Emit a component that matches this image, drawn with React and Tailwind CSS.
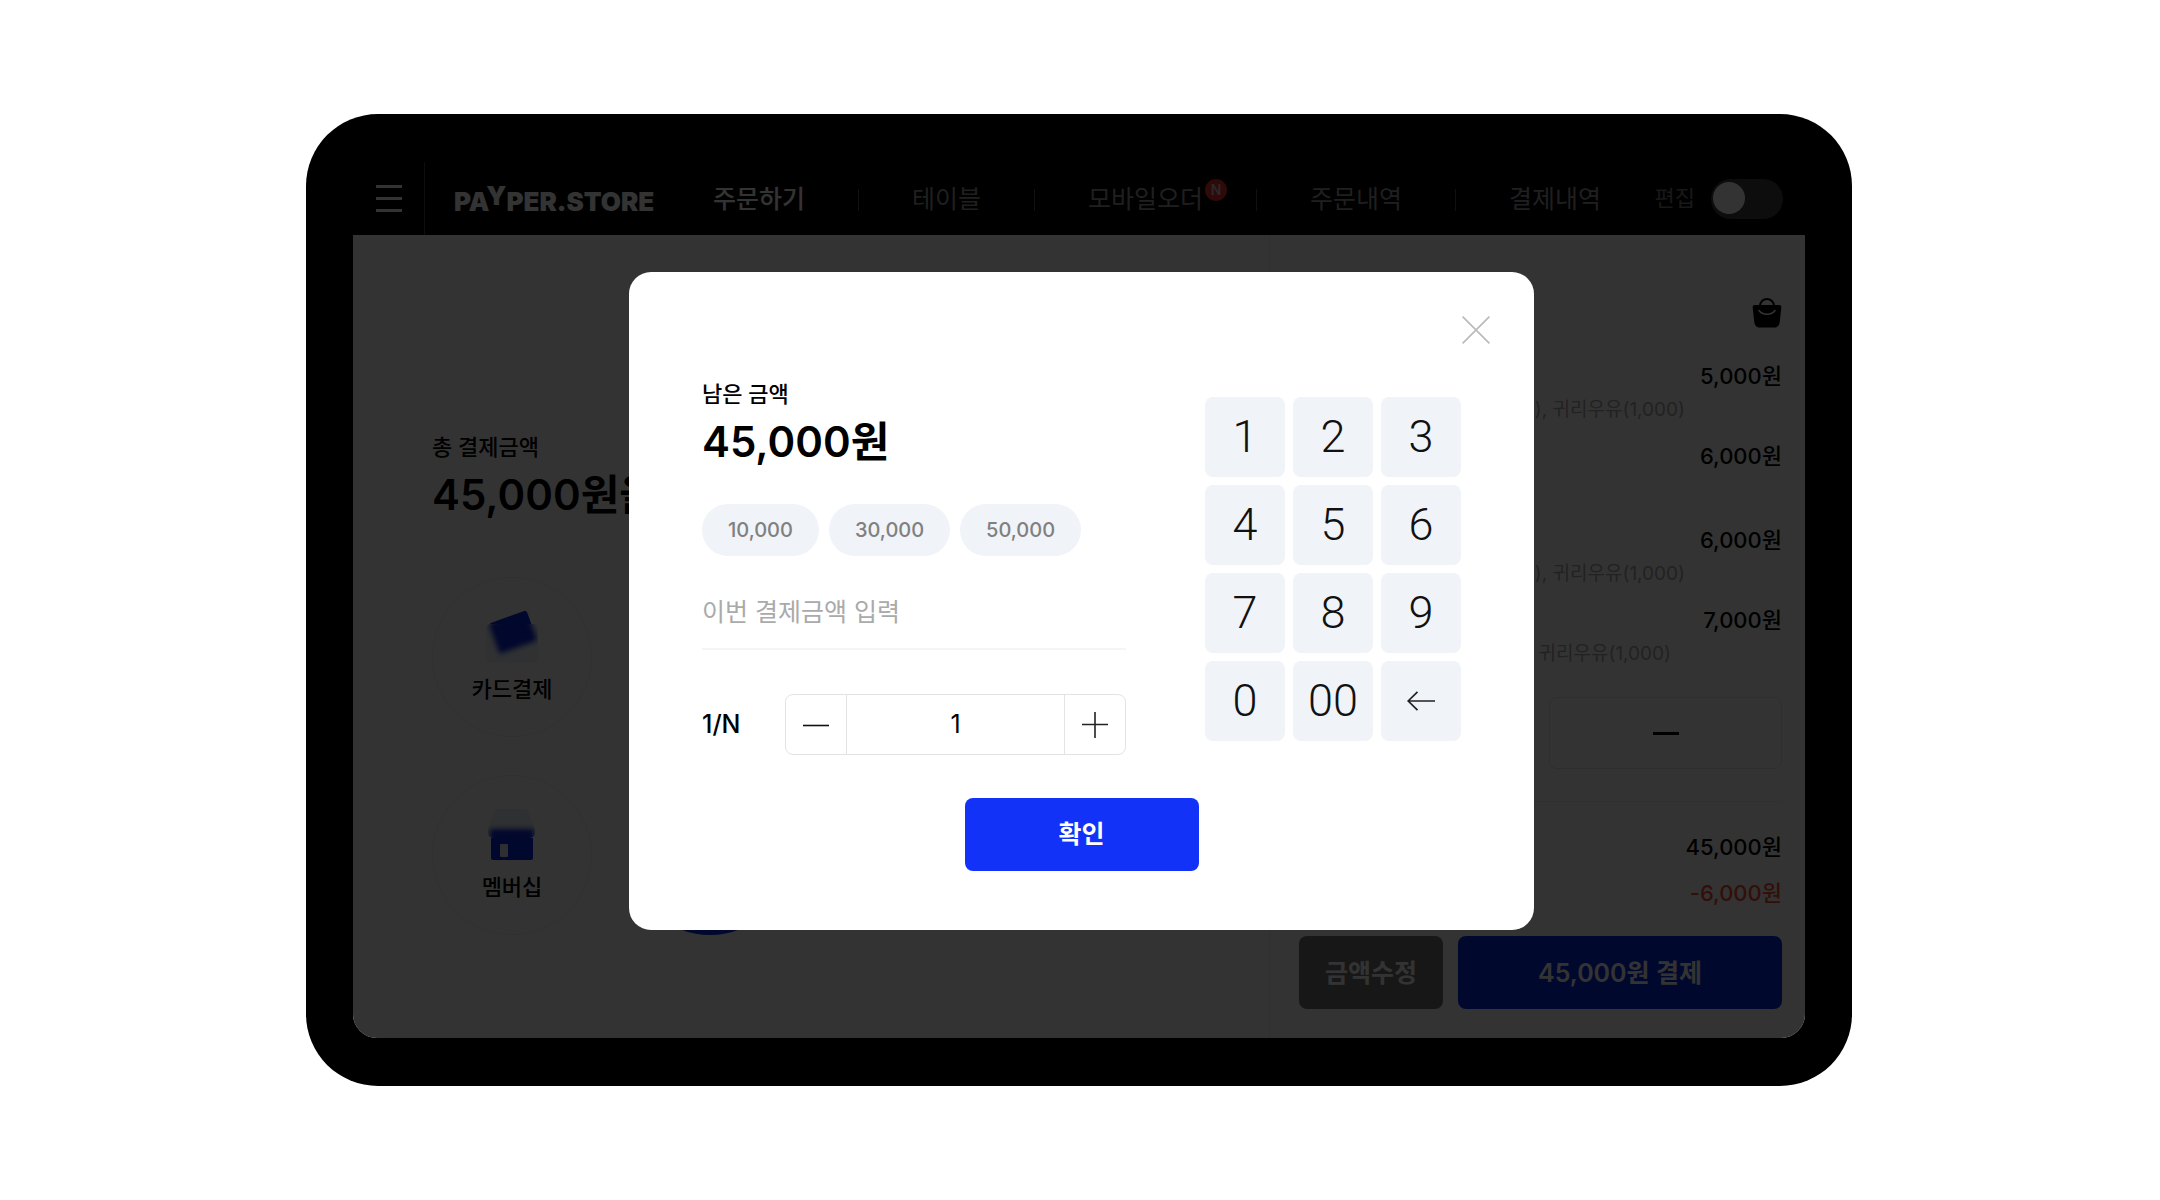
import React, { useState } from 'react';

const tabs = [
  { name: '주문하기', active: true },
  { name: '테이블' },
  { name: '모바일오더', isNew: true },
  { name: '주문내역' },
  { name: '결제내역' }
];

const orderItems = [
  { id: 1, price: '5,000원', option: '), 귀리우유(1,000)', optionClass: 'pr-[97px]' },
  { id: 2, price: '6,000원' },
  { id: 3, price: '6,000원', option: '), 귀리우유(1,000)', optionClass: 'pr-[97px]' },
  { id: 4, price: '7,000원', option: '귀리우유(1,000)', optionClass: 'pr-[111px]' }
];

const quickAmounts = ['10,000', '30,000', '50,000'];
const keys = ['1', '2', '3', '4', '5', '6', '7', '8', '9', '0', '00'];

const Logo = () => (
  <svg width="204" height="48" viewBox="0 0 204 48" className="overflow-visible" role="img" aria-label="PAYPER.STORE">
    <text x="0" y="36" fill="#fff" fontSize="26" fontWeight="900" fontFamily="Inter, sans-serif">
      PA<tspan dx="-1" dy="-6">Y</tspan><tspan dy="6">PER.STORE</tspan>
    </text>
  </svg>
);

const CardIcon = () => (
  <svg width="52" height="52" viewBox="0 0 52 52" aria-hidden="true">
    <defs>
      <filter id="cardBlur" x="-20%" y="-20%" width="140%" height="140%">
        <feGaussianBlur stdDeviation="2.5" />
      </filter>
      <clipPath id="cardTop"><rect x="0" y="0" width="52" height="13" /></clipPath>
      <clipPath id="cardFront"><rect x="0" y="13" width="52" height="39" rx="4" /></clipPath>
    </defs>
    <rect x="0" y="13" width="52" height="39" rx="4" fill="#eaf2f8" />
    <g clipPath="url(#cardTop)">
      <rect x="7" y="5" width="40" height="32" rx="3" fill="#0828e0" transform="rotate(-20 27 21)" />
    </g>
    <g clipPath="url(#cardFront)">
      <rect x="7" y="5" width="40" height="32" rx="3" fill="#0828e0" transform="rotate(-20 27 21)" filter="url(#cardBlur)" />
    </g>
  </svg>
);

const StoreIcon = () => (
  <svg width="52" height="52" viewBox="0 0 52 52" aria-hidden="true">
    <defs>
      <filter id="storeBlur" x="-20%" y="-40%" width="140%" height="180%">
        <feGaussianBlur stdDeviation="2.5" />
      </filter>
      <clipPath id="storeRoof"><path d="M9 0h32l8 20v4a5 5 0 0 1-5 5H7a5 5 0 0 1-5-5v-4z" /></clipPath>
    </defs>
    <path d="M9 0h32l8 20v4a5 5 0 0 1-5 5H7a5 5 0 0 1-5-5v-4z" fill="#eaf0f8" />
    <path d="M5 29h42v20a2 2 0 0 1-2 2H7a2 2 0 0 1-2-2z" fill="#0828e0" />
    <g clipPath="url(#storeRoof)">
      <rect x="4" y="20" width="44" height="20" fill="#0828e0" filter="url(#storeBlur)" />
    </g>
    <rect x="14" y="35" width="8" height="13" rx="1" fill="#e6ebf2" />
  </svg>
);

const BagIcon = () => (
  <svg width="30" height="30" viewBox="0 0 30 30" aria-hidden="true">
    <path d="M8 9V8a7 7 0 0 1 14 0v1" fill="none" stroke="#000" strokeWidth="2" />
    <path d="M3 7h24c1.800 0 2.500 1 2.300 2.500l-1.500 14c-.5 4-2.300 6-5.800 6H8c-3.500 0-5.300-2-5.800-6L.7 9.500C.5 8 1.200 7 3 7z" fill="#000" />
    <path d="M7 12.500c3.500 5 12.500 5 16 0" fill="none" stroke="#fff" strokeWidth="1.500" strokeLinecap="round" />
  </svg>
);

const Header = () => (
  <header className="flex h-[73px] items-stretch bg-black text-white">
    <button
      type="button"
      aria-label="메뉴"
      className="flex w-[72px] shrink-0 flex-col items-center justify-center gap-[9px] border-r border-[#444]"
    >
      <span className="h-[3px] w-[26px] bg-white" />
      <span className="h-[3px] w-[26px] bg-white" />
      <span className="h-[3px] w-[26px] bg-white" />
    </button>
    <a href="#" className="ml-[29px] flex shrink-0 items-center">
      <Logo />
    </a>
    <nav className="ml-0.5 flex items-center pt-0.5">
      {tabs.map((tab, index) => (
        <React.Fragment key={tab.name}>
          {index > 0 && <span className="h-[22px] w-px bg-[#555]" />}
          <a
            href="#"
            className={`relative px-[53px] text-[25px] whitespace-nowrap ${
              tab.active ? 'font-medium text-white' : 'text-[#999]'
            }`}
          >
            {tab.name}
            {tab.isNew && (
              <span className="absolute -top-0.5 right-[29px] flex size-[22px] items-center justify-center rounded-full bg-[#e8332c] text-sm font-semibold text-[#ccc]">
                N
              </span>
            )}
          </a>
        </React.Fragment>
      ))}
    </nav>
    <label className="ml-auto flex items-center gap-4 pr-[22px] text-[22px] whitespace-nowrap text-[#777]">
      편집
      <input
        type="checkbox"
        className="h-10 w-[72px] appearance-none rounded-full bg-[#444] before:mt-[3px] before:ml-0.5 before:block before:size-8 before:rounded-full before:bg-white"
      />
    </label>
  </header>
);

const MethodButton = ({ icon, label }) => (
  <button
    type="button"
    className="flex size-40 flex-col items-center gap-3 rounded-full border border-[#eee] pt-[33px] text-[22px] leading-7 font-medium"
  >
    {icon}
    {label}
  </button>
);

const PaymentMethods = () => (
  <section className="flex-1 pt-[198px] pl-[79px]">
    <p className="text-[22px] leading-7 font-medium">총 결제금액</p>
    <p className="mt-1.5 text-[42px] leading-14 font-semibold whitespace-nowrap">45,000원을</p>
    <div className="mt-[54px] grid grid-cols-[160px_160px] gap-[38px]">
      <MethodButton icon={<CardIcon />} label="카드결제" />
      <span />
      <MethodButton icon={<StoreIcon />} label="멤버십" />
      <span className="size-40 rounded-full bg-[#0828e0]" />
    </div>
  </section>
);

const OrderPanel = () => (
  <aside className="flex w-[536px] shrink-0 flex-col border-l border-[#f0f0f0] pt-[63px] pr-[23px] pb-[29px] pl-[29px] text-[22px] leading-[34px]">
    <div className="flex justify-end">
      <BagIcon />
    </div>
    <ul className="mt-[31px] flex flex-col gap-3">
      {orderItems.map((item) => (
        <li key={item.id} className={`text-right ${item.option ? '' : 'min-h-18'}`}>
          <p className="font-medium">{item.price}</p>
          {item.option && <p className={`text-[19px] leading-[34px] text-[#aaa] ${item.optionClass}`}>{item.option}</p>}
        </li>
      ))}
    </ul>
    <div className="mt-[26px] flex justify-end">
      <button
        type="button"
        aria-label="접기"
        className="flex h-18 w-[233px] items-center justify-center rounded-lg border border-[#e5e5e5]"
      >
        <span className="h-[3px] w-[26px] bg-black" />
      </button>
    </div>
    <div className="mt-8 flex flex-col gap-3 border-t border-[#eee] pt-7 text-right font-medium">
      <p>45,000원</p>
      <p className="text-[#ff4a36]">-6,000원</p>
    </div>
    <div className="mt-auto flex gap-[15px] text-[25px] font-semibold text-white">
      <button type="button" className="h-[73px] w-36 rounded-lg bg-[#757575]">금액수정</button>
      <button type="button" className="h-[73px] flex-1 rounded-lg bg-[#0828e0]">45,000원 결제</button>
    </div>
  </aside>
);

const Keypad = ({ onKey, onDelete }) => (
  <div className="mt-[17px] grid grid-cols-[80px_80px_80px] content-start gap-2">
    {keys.map((key) => (
      <button
        key={key}
        type="button"
        onClick={() => onKey(key)}
        className="flex size-20 items-center justify-center rounded-lg bg-[#f0f3f8] font-['Roboto'] text-[45px] font-light text-[#111]"
      >
        {key}
      </button>
    ))}
    <button
      type="button"
      aria-label="지우기"
      onClick={onDelete}
      className="flex size-20 items-center justify-center rounded-lg bg-[#f0f3f8]"
    >
      <svg width="28" height="20" viewBox="0 0 28 20" fill="none" stroke="#222" strokeWidth="1.700" aria-hidden="true">
        <path d="M28 10H1M10.500 .8L1.200 10l9.300 9.200" />
      </svg>
    </button>
  </div>
);

const SplitModal = () => {
  const [amount, setAmount] = useState('');
  const [count, setCount] = useState(1);

  return (
    <div
      role="dialog"
      aria-modal="true"
      aria-label="남은 금액"
      className="w-full max-w-[905px] rounded-[22px] bg-white pt-[34px] pb-[59px]"
    >
      <div className="flex justify-end pr-[34px]">
        <button type="button" aria-label="닫기" className="flex size-12 items-center justify-center">
          <svg width="28" height="28" viewBox="0 0 28 28" stroke="#bbb" strokeWidth="1.700" aria-hidden="true">
            <path d="M.6.600l26.800 26.800M27.400.600L.6 27.400" />
          </svg>
        </button>
      </div>

      <div className="mt-[26px] flex gap-[79px] px-[73px]">
        <div className="flex-1">
          <p className="text-[22px] leading-7 font-medium">남은 금액</p>
          <p className="mt-1.5 text-[42px] leading-14 font-semibold">45,000원</p>

          <div className="mt-[34px] flex gap-2.5">
            {quickAmounts.map((value) => (
              <button
                key={value}
                type="button"
                onClick={() => setAmount(value)}
                className="h-[52px] rounded-full bg-[#f0f3f8] px-[26px] text-xl font-medium text-[#808080]"
              >
                {value}
              </button>
            ))}
          </div>

          <input
            type="text"
            aria-label="이번 결제금액 입력"
            placeholder="이번 결제금액 입력"
            value={amount}
            onChange={(e) => setAmount(e.target.value)}
            className="mt-5 h-[74px] w-full border-b-2 border-[#f5f5f5] text-[25px] outline-none placeholder:text-[#aaa]"
          />

          <div className="mt-11 flex items-center justify-between">
            <label htmlFor="split-count" className="text-[25px] font-medium">1/N</label>
            <div className="flex h-[61px] w-[341px] rounded-lg border border-[#e3e3e3]">
              <button
                type="button"
                aria-label="빼기"
                onClick={() => setCount(Math.max(1, count - 1))}
                className="flex w-[60px] items-center justify-center"
              >
                <svg width="28" height="28" viewBox="0 0 28 28" stroke="#111" strokeWidth="1.600" aria-hidden="true">
                  <path d="M1 14.500h26" />
                </svg>
              </button>
              <input
                id="split-count"
                type="text"
                inputMode="numeric"
                value={count}
                onChange={(e) => setCount(Number(e.target.value) || 1)}
                className="min-w-0 flex-1 border-x border-[#e3e3e3] text-center text-[25px] outline-none"
              />
              <button
                type="button"
                aria-label="더하기"
                onClick={() => setCount(count + 1)}
                className="flex w-[60px] items-center justify-center"
              >
                <svg width="28" height="28" viewBox="0 0 28 28" stroke="#222" strokeWidth="1.600" aria-hidden="true">
                  <path d="M1 13.500h26M14 1v26" />
                </svg>
              </button>
            </div>
          </div>
        </div>

        <Keypad onKey={(key) => setAmount(amount + key)} onDelete={() => setAmount(amount.slice(0, -1))} />
      </div>

      <div className="mt-[43px] flex justify-center">
        <button type="button" className="h-[73px] w-[234px] rounded-lg bg-[#1232f8] text-[25px] font-semibold text-white">
          확인
        </button>
      </div>
    </div>
  );
};

const App = () => {
  return (
    <div className="flex min-h-screen items-center justify-center bg-white pr-0.5 font-['Inter','Noto_Sans_CJK_KR',sans-serif] text-black">
      <div className="w-full max-w-[1546px] rounded-[72px] bg-black px-[47px] py-12">
        <div className="relative overflow-hidden rounded-b-3xl bg-white">
          <Header />
          <main className="flex min-h-[803px]">
            <PaymentMethods />
            <OrderPanel />
          </main>

          {/* Dimmed layer with the split payment dialog */}
          <div className="absolute inset-0 flex items-center justify-center bg-black/80 pt-0.5 pl-[5px]">
            <SplitModal />
          </div>
        </div>
      </div>
    </div>
  );
};

export default App;
